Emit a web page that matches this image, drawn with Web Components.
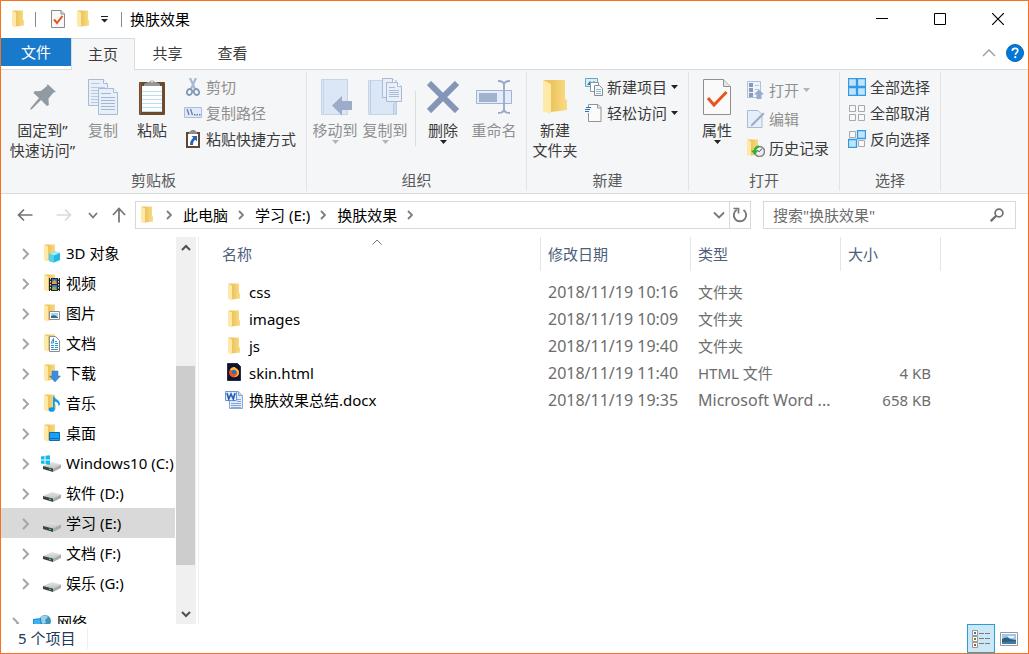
<!DOCTYPE html>
<html lang="zh-CN">
<head>
<meta charset="utf-8">
<title>换肤效果</title>
<style>
:root{
  --accent:#1979ca; --frame:#f7721f; --line:#dadbdc; --ribbon:#f5f6f7;
  --text:#000; --ribbon-text:#3b3b3b; --muted:#6d6d6d; --head:#4c607a; --off:#8f8f8f;
}
html,body{height:100%}
body{margin:0;font:15px/20px "Noto Sans","Noto Sans CJK SC",sans-serif;color:var(--text);background:#fff}
</style>
</head>
<body>
<explorer-window>
  <title-bar slot="title">换肤效果</title-bar>
  <tab-strip slot="tabs"></tab-strip>
  <ribbon-bar slot="ribbon">
    <ribbon-group label="剪贴板">
      <ribbon-button large icon="pin" style="--w:77px">固定到”<br>快速访问”</ribbon-button>
      <ribbon-button large icon="copy" off style="--w:44px">复制</ribbon-button>
      <ribbon-button large icon="paste" style="--w:54px">粘贴</ribbon-button>
      <ribbon-stack>
        <ribbon-button icon="cut" off>剪切</ribbon-button>
        <ribbon-button icon="path" off>复制路径</ribbon-button>
        <ribbon-button icon="shortcut">粘贴快捷方式</ribbon-button>
      </ribbon-stack>
    </ribbon-group>
    <ribbon-group label="组织" style="--end:8px">
      <ribbon-button large icon="moveto" off arrow style="--w:50px">移动到</ribbon-button>
      <ribbon-button large icon="copyto" off arrow style="--w:50px">复制到</ribbon-button>
      <ribbon-rule></ribbon-rule>
      <ribbon-button large icon="delete" arrow style="--w:54px">删除</ribbon-button>
      <ribbon-button large icon="rename" off style="--w:48px">重命名</ribbon-button>
    </ribbon-group>
    <ribbon-group label="新建">
      <ribbon-button large icon="folderL" style="--w:50px">新建<br>文件夹</ribbon-button>
      <ribbon-stack>
        <ribbon-button icon="newitem" arrow>新建项目</ribbon-button>
        <ribbon-button icon="easy" arrow>轻松访问</ribbon-button>
      </ribbon-stack>
    </ribbon-group>
    <ribbon-group label="打开">
      <ribbon-button large icon="props" arrow style="--w:50px">属性</ribbon-button>
      <ribbon-stack loose>
        <ribbon-button icon="open" off arrow>打开</ribbon-button>
        <ribbon-button icon="edit" off>编辑</ribbon-button>
        <ribbon-button icon="history">历史记录</ribbon-button>
      </ribbon-stack>
    </ribbon-group>
    <ribbon-group label="选择">
      <ribbon-stack>
        <ribbon-button icon="selall">全部选择</ribbon-button>
        <ribbon-button icon="selnone">全部取消</ribbon-button>
        <ribbon-button icon="selinv">反向选择</ribbon-button>
      </ribbon-stack>
    </ribbon-group>
  </ribbon-bar>
  <address-row slot="address"></address-row>
  <nav-pane slot="nav"></nav-pane>
  <file-list slot="files"></file-list>
  <status-bar slot="status">5 个项目</status-bar>
</explorer-window>

<script>
const folderShape = `<path d="M1 1h21v19l2 1v10l-16 2z" fill="url(#fg)"/><path d="M0 1l8 4v30l-8-3z" fill="#ffe9a6"/>`;
const defs = `<defs><linearGradient id="fg" x1="0" y1="0" x2="1" y2="0"><stop offset=".3" stop-color="#ebc35f"/><stop offset="1" stop-color="#fbdc83"/></linearGradient>
<linearGradient id="dg" x1="0" y1="0" x2="0" y2="1"><stop offset="0" stop-color="#e4e4e6"/><stop offset="1" stop-color="#c4c4c8"/></linearGradient></defs>`;
const sub = (extra) => [17,19, `<g transform="scale(.5 .5)">${folderShape}</g>${extra}`];
const drive = `<path d="M0 12l9-4 9 2.500-8 4z" fill="url(#dg)"/><path d="M0 12l10 2.500V18L0 15z" fill="#3f4245"/><path d="M10 14.500l8-4v3.500l-8 4z" fill="#a9aaad"/><path d="M6 14.500l2 .5v1.300l-2-.5z" fill="#48d043"/>`;
const page = (x,y,w,h) => `<path d="M${x+.5} ${y+.5}h${w-5}l4 4v${h-5}h${-(w-1)}z" fill="#e9eff9" stroke="#a9bad6"/><path d="M${x+w-4.5} ${y+.5}v4h4" fill="#fff" stroke="#a9bad6"/>`;
const rules = (x,y,w,n,s,c) => Array.from({length:n},(_,i)=>`<path d="M${x} ${y+i*s+.5}h${w}" stroke="${c}"/>`).join('');
const cellOn = ([x,y]) => `<path d="M${x+.5} ${y+.5}h8v8h-8z" fill="#bfe4fd" stroke="#3498e3" stroke-width="1.300"/>`;
const cellOff = ([x,y]) => `<path d="M${x+.5} ${y+.5}h6v6h-6z" fill="#f8f8f8" stroke="#a9a9a9"/>`;
const ICONS = {
  folder:[12,18, `<g transform="scale(.5 .5)">${folderShape}</g>`],
  folderL:[24,36, folderShape],
  tinydoc:[14,18, `<path d="M.5.5h9.500l3.500 3.500v13.500H.5z" fill="#f8f8f8" stroke="#8b8b8b"/><path d="M10 .5V4h3.500" fill="#ddd" stroke="#8b8b8b"/><path d="M3 9.500l3 3.500 5.500-7" fill="none" stroke="#e8501c" stroke-width="2"/>`],
  qat:[7,7, `<path d="M0 .5h7" stroke="#222"/><path d="M0 3h7L3.500 6.500z" fill="#222"/>`],
  min:[12,12, `<path d="M0 5.500h12" stroke="#000"/>`],
  max:[12,12, `<path d="M.5.5h11v11H.5z" fill="none" stroke="#000"/>`],
  close:[12,12, `<path d="M0 0l12 12M12 0L0 12" stroke="#000" stroke-width="1.200"/>`],
  collapse:[14,8, `<path d="M1 7l6-6 6 6" fill="none" stroke="#9a9a9a" stroke-width="1.300"/>`],
  help:[18,18, `<circle cx="9" cy="9" r="8.500" fill="#0078d7" stroke="#0a64b4"/><path d="M6.300 7c0-1.600 1.100-2.600 2.800-2.600s2.700 1 2.700 2.300c0 1.900-2.400 1.900-2.400 4" fill="none" stroke="#fff" stroke-width="1.700"/><circle cx="9.300" cy="13.200" r="1.100" fill="#fff"/>`],
  pin:[26,26, `<path d="M17.500 0L26 8l-2.500.5-5 6 .3 6.500-1.800 1-6-6L2 25l-2 1 1-2.500L9 14 3.500 9l1-1.700 6.300-.2L17 2z" fill="#8f9aa3"/>`],
  copy:[30,36, page(0,0,20,27)+rules(3,4,9,1,3,'#b8c9e2')+rules(3,8,14,6,3,'#b8c9e2')+page(10,9,20,27)+rules(13,14,10,1,3,'#a3b6d3')+rules(13,18,14,5,3,'#a3b6d3')],
  paste:[28,38, `<rect x="1" y="4" width="26" height="33" rx="1" fill="#6d4a2e"/><path d="M2 5h1v31H2z" fill="#8b6545"/><path d="M4 8h20v26H4z" fill="#fdfeff"/>${rules(4,13,20,6,4,'#bfdcec')}<path d="M6 8V6l4-2h1.500a2.700 3 0 0 1 5 0H18l4 2v2z" fill="#969696"/><circle cx="14" cy="3.500" r="1" fill="#eee"/>`],
  cut:[18,18, `<path d="M6 0l5.500 12M12 0L6.500 12" stroke="#a9b8d2" stroke-width="2.200"/><ellipse cx="5.500" cy="14" rx="2.500" ry="3" transform="rotate(20 5.500 14)" fill="none" stroke="#8397bb" stroke-width="1.800"/><ellipse cx="12.500" cy="14" rx="2.500" ry="3" transform="rotate(-20 12.500 14)" fill="none" stroke="#8397bb" stroke-width="1.800"/>`],
  path:[18,18, `<path d="M.5 3.500h17v10H.5z" fill="#dfe9f8" stroke="#abbeda"/><path d="M3 5l2 6M6.500 5l2 6" stroke="#69809f" stroke-width="1.300"/><path d="M10 10h1.500v1.500H10zM12.500 10H14v1.500h-1.500zM15 10h1.500v1.500H15z" fill="#69809f"/>`],
  shortcut:[18,18, `<path d="M2 2h14v16H2z" fill="#644631"/><path d="M4 4h10v12H4z" fill="#fff"/><path d="M5 2l3-2h2l3 2v2H5z" fill="#8c8c8c"/><path d="M7.500 6H13v5.500l-1.700-1.700C9.500 11 9 12.500 9 15H6c0-3 1-5.300 3.300-7.200z" fill="#2b63b1"/>`],
  moveto:[34,38, `<path d="M3.500 1.500h26v35h-26z" fill="#dbe6f6" stroke="#c6d4ea"/><path d="M5.500 2v34" stroke="#c6d4ea"/><path d="M14 27.500l10-9.500v5h11v9H24v5.500z" fill="#9dadc9"/>`],
  copyto:[34,38, `<path d="M.5 2.500h28v34H.5z" fill="#dbe6f6" stroke="#c6d4ea"/><path d="M2.500 3v33M25.500 36V26q3-4 3 0v10z" stroke="#bccbe2" fill="#cedbee"/>${page(14,0,15,20)}${page(18,4,16,20)}${rules(21,9,6,1,3,'#a9bbd5')}${rules(21,12,10,4,2,'#a9bbd5')}`],
  delete:[32,32, `<path d="M2 2l28 28M30 2L2 30" stroke="#8595b6" stroke-width="6"/>`],
  rename:[36,36, `<path d="M.5 11.500h35v13H.5z" fill="#e2ecfa" stroke="#a2b4d0"/><path d="M3 14h18v9H3z" fill="#a2b2cd"/><path d="M22 2c4 0 6 1 6 4v24c0 3-2 4-6 4M34 2c-4 0-6 1-6 4v24c0 3 2 4 6 4" fill="none" stroke="#98a9c7" stroke-width="1.800"/>`],
  newitem:[18,18, `<path d="M.5.5h12v8H.5z" fill="#d8eef9" stroke="#6ea3be"/><path d="M2 7l3-4 2 2 2-2 3 4z" fill="#367fa8"/><path d="M5.500 4.500h8v9h-8z" fill="#fff" stroke="#8d969b"/><path d="M9.500 7.500h5l3 3v7h-8z" fill="#f1f7fb" stroke="#848c91"/>${rules(11,11,5,3,2,'#9bbad1')}`],
  easy:[18,18, `<path d="M3.500.5H13l3 3v14H3.500z" fill="#fbfbfb" stroke="#949494"/><path d="M12.500.5v3.500H16" fill="none" stroke="#949494"/><path d="M1 3h6v6H1z" fill="#f5f6f7"/><path d="M1 3.500h5M0 5.500h5M0 7.500h4" stroke="#2f72b5"/>`],
  props:[28,36, `<path d="M.5.5h20l7 7v28H.5z" fill="#fafafa" stroke="#909090"/><path d="M20.500.5v7h7" fill="#e5e5e5" stroke="#909090"/><path d="M5 19l6 7L23.500 13" fill="none" stroke="#e9531d" stroke-width="3"/>`],
  open:[18,18, `<path d="M.5.5h13v16H.5z" fill="#edf3fb" stroke="#b1c0d8"/><path d="M2 2h4v4H2zM2 7h4v4H2zM2 12h4v4H2z" fill="#8699bb"/>${rules(8,4,4,3,4,'#b7c6dc')}<path d="M12 8.500l5 5h-2.500V18h-5v-4.500H7z" fill="#9aabc9"/>`],
  edit:[18,18, `<path d="M.5.500H11l4 4v13H.500z" fill="#e6eef9" stroke="#a9bad4"/><path d="M16 2.500l1.500 1.500L6 15.500l-2.500 1 1-2.500z" fill="#9aabc7"/>`],
  history:[18,18, `<g transform="scale(.5 .5)">${folderShape}</g><circle cx="12.500" cy="12.500" r="5" fill="#eee" stroke="#858585" stroke-width="1.500"/><path d="M12.500 12.500l2.500-3M12.500 12.500l-2.500-1" stroke="#555"/><path d="M12 6.500c-3 0-5 2-5.300 5H4l4 4.500 3-4.500H9.200c.2-1.500 1.300-2.600 3-3z" fill="#28b03c"/>`],
  selall:[18,18, [[0,0],[9,0],[0,9],[9,9]].map(cellOn).join('')],
  selnone:[18,18, [[1,1],[10,1],[1,10],[10,10]].map(cellOff).join('')],
  selinv:[18,18, [[1,1],[10,10]].map(cellOff).join('')+[[9,0],[0,9]].map(cellOn).join('')],
  down:[7,4, `<path d="M0 0h7L3.500 4z" fill="currentColor"/>`],
  back:[16,14, `<path d="M15.500 7H1.500M7 1.500L1.500 7 7 12.500" fill="none" stroke="#737373" stroke-width="1.700"/>`],
  fwd:[16,14, `<path d="M.5 7h14M9 1.500L14.500 7 9 12.500" fill="none" stroke="#dadada" stroke-width="1.700"/>`],
  up:[14,16, `<path d="M7 15.500V1.500M1 8l6-6.500L13 8" fill="none" stroke="#737373" stroke-width="1.700"/>`],
  chevD:[10,7, `<path d="M1 1l4 4.500L9 1" fill="none" stroke="#777" stroke-width="1.800"/>`],
  chevDL:[12,8, `<path d="M1 1.500l5 5 5-5" fill="none" stroke="#777" stroke-width="1.800"/>`],
  chevR:[6,10, `<path d="M1 1l4 4-4 4" fill="none" stroke="#7d7d7d" stroke-width="1.800"/>`],
  tree:[8,12, `<path d="M1 1l5 5-5 5" fill="none" stroke="#a6a6a6" stroke-width="2"/>`],
  sbUp:[10,7, `<path d="M1 6l4-4 4 4" fill="none" stroke="#505050" stroke-width="2"/>`],
  sbDown:[10,7, `<path d="M1 1l4 4 4-4" fill="none" stroke="#505050" stroke-width="2"/>`],
  sort:[10,6, `<path d="M.5 5.500L5 1l4.500 4.500" fill="none" stroke="#777"/>`],
  refresh:[16,16, `<path d="M4.800 2.800A6.200 6.200 0 1 0 11.500 3" fill="none" stroke="#777" stroke-width="1.900"/><path d="M1.500 1.500h5v5" fill="none" stroke="#777" stroke-width="1.700"/>`],
  search:[14,14, `<circle cx="9" cy="5" r="3.900" fill="none" stroke="#6f6f6f" stroke-width="1.700"/><path d="M6.200 7.800L.8 13.200" stroke="#6f6f6f" stroke-width="2.300"/>`],
  f3d:sub(`<path d="M5 10l6-2.500 5 1.500v7l-6 2.500-5-1.500z" fill="#24b8de"/><path d="M5 10l6-2.500 5 1.500-6 2.500z" fill="#a6ecf8"/><path d="M5 10l5 1.500v7L5 17z" fill="#52d2ec"/>`),
  fvid:sub(`<path d="M5 4h11v13H5z" fill="#26262a"/><path d="M8 5h5v5H8zM8 11h5v5H8z" fill="#3276cf"/><path d="M8 8l3-2 2 4H8z" fill="#f0a030"/><path d="M8 14l3-2 2 4H8z" fill="#86b640"/><path d="M6.500 4v13M14.500 4v13" stroke="#ddd" stroke-dasharray="1.500 1.500"/>`),
  fpic:sub(`<path d="M5.500 7.500h10v8h-10z" fill="#fff" stroke="#8c8c8c"/><path d="M7 9h7v3H7z" fill="#a4d4f6"/><path d="M7 14v-2l3-1 4 2v1z" fill="#346b86"/>`),
  fdoc:sub(`<path d="M5.500 2.500h6l4 4v11h-10z" fill="#fff" stroke="#8c8c8c"/><path d="M7 9l2.500-4.500V9zM11 7.500h2M11 9.500h3M7 11.500h3M11 11.500h3M7 13.500h3M11 13.500h3M7 15.500h7" fill="none" stroke="#2c8fd2"/>`),
  fdown:sub(`<path d="M8 7h6v5h2.500L11 18l-5.500-6H8z" fill="#3c8ddb" stroke="#2878c4" stroke-width=".5"/>`),
  fmus:sub(`<ellipse cx="7.700" cy="15.500" rx="3" ry="2.300" fill="#0c9bf2"/><path d="M9 15.500V2.500h1.500c0 3 5.500 3 5.500 8l-1.500 1.500c0-3-1.500-4-3.800-4.500v8z" fill="#0c9bf2"/>`),
  fdesk:sub(`<path d="M5.500 8.500h10v8h-10z" fill="#1ba1f3" stroke="#0c69b2"/><path d="M6 14.500h9" stroke="#0d6dbc"/>`),
  drive:[18,18, drive],
  windrive:[20,18, `<g transform="translate(2 0)">${drive}</g><path d="M0 2.500L3.500 2v3.500H0zM4.500 1.800L9 1.200v4.300H4.500zM0 6.500h3.500V10L0 9.500zM4.500 6.500H9v4.300l-4.500-.6z" fill="#12b8f4"/>`],
  network:[18,18, `<circle cx="12" cy="8" r="6" fill="#3f94bd"/><path d="M7 5c2-3 6-3 8-1l-3 3 1 3-3 1-3-3z" fill="#98d0e6"/><path d="M0 6l8-1 1 10-9 1z" fill="#1c8dd9"/><path d="M1 7l6-.7.800 8L1 15z" fill="#3cb0f2"/>`],
  firefox:[18,19, `<path d="M2.500.5h10l3 3v14h-13z" fill="#0c1230" stroke="#252d4e"/><circle cx="9" cy="9.500" r="5" fill="#f15126"/><path d="M5 7c1-3 3.500-3 5-3-1 1 4 2 4 5.500 0 3-2 4.500-5 4.500 2-1 4-2.500 3-5.500z" fill="#ffbd2d"/><circle cx="9" cy="9" r="2.300" fill="#316dc5"/>`],
  word:[18,20, `<path d="M4.500 1.500h9l4 4v13h-13z" fill="#dfeafa" stroke="#8fa7c9"/><path d="M13.500 1.500v4h4" fill="#c7d9ef" stroke="#8fa7c9"/>${rules(12,9,4,2,2,'#86a9dc')}${rules(6,13,10,3,2,'#86a9dc')}<path d="M.5 1.500h11v9H.5z" fill="#e9f1fc" stroke="#6d95cf"/><path d="M2 3l1.700 6 2.300-5 2.300 5L10 3" fill="none" stroke="#2c62b8" stroke-width="1.700"/>`],
  vdetail:[18,18, `${[0,6,12].map(y=>`<path d="M.5 ${y+.5}h5v5h-5z" fill="#fff" stroke="#999"/>`).join('')}<path d="M2 2h2v2H2z" fill="#3d7aa8"/><path d="M2 8h2v2H2z" fill="#6c8437"/><path d="M2 14h2v2H2z" fill="#c3431f"/><path d="M7 3.500h5M13 3.500h5M7 8.500h5M13 8.500h5M7 13.500h5M13 13.500h5" stroke="#7b7b7b"/>`],
  vpic:[18,14, `<path d="M.5.5h17v13H.5z" fill="#fff" stroke="#999"/><path d="M2 2h14v10H2z" fill="#9dc7f1"/><path d="M2 7c3-2 6-2 8 0l6 1v4H2z" fill="#315c72"/><path d="M2 10l14-1v3H2z" fill="#4179a7"/><path d="M8 4h6v2H9z" fill="#e8f3fd"/>`]
};
class Base extends HTMLElement{
  constructor(){super();this.attachShadow({mode:'open'})}
  connectedCallback(){
    this.shadowRoot.innerHTML = `<style>
      *{box-sizing:border-box} :host{display:block;box-sizing:border-box}
      button{font:inherit;color:inherit;border:0;background:none;padding:0;margin:0;display:flex;align-items:center;justify-content:center}
      a{color:inherit;text-decoration:none}
      ${this.css||''}</style>${this.html()}`;
  }
}
const define = (name, css, html) => customElements.define(name, class extends Base{
  get css(){return css} html(){return html.call(this)}
});

define('ui-icon', `:host{display:inline-flex;flex:none} svg{display:block}`, function(){
  const [w,h,body] = ICONS[this.getAttribute('name')];
  return `<svg aria-hidden="true" width="${w}" height="${h}" viewBox="0 0 ${w} ${h}">${defs}${body}</svg>`;
});

define('explorer-window', `
  :host{height:100vh;border:1px solid var(--frame);display:grid;grid-template-rows:auto auto auto auto minmax(0,1fr) auto;background:#fff}
  main{display:grid;grid-template-columns:auto minmax(0,1fr);min-height:0}`,
  () => `<slot name="title"></slot><slot name="tabs"></slot><slot name="ribbon"></slot><slot name="address"></slot>
  <main><slot name="nav"></slot><slot name="files"></slot></main><slot name="status"></slot>`);

define('title-bar', `
  :host{display:flex;height:37px;align-items:center;padding:0 1px 1px 11px}
  i{width:1px;height:15px;background:#8a8a8a}
  .qat{display:flex;margin:0 7px 0 9px} .qat button{padding:0 6px;height:24px}
  ui-icon.app{margin-right:11px}
  h1{font:inherit;margin:0 0 0 8px;flex:1}
  .win{display:flex;align-self:stretch} .win button{width:58px}`,
  () => `<ui-icon class="app" name="folder"></ui-icon><i></i>
  <div class="qat"><button aria-label="属性"><ui-icon name="tinydoc"></ui-icon></button><button aria-label="新建文件夹"><ui-icon name="folder"></ui-icon></button><button aria-label="自定义快速访问工具栏"><ui-icon name="qat"></ui-icon></button></div>
  <i></i><h1><slot></slot></h1>
  <div class="win"><button aria-label="最小化"><ui-icon name="min"></ui-icon></button><button aria-label="最大化"><ui-icon name="max"></ui-icon></button><button aria-label="关闭"><ui-icon name="close"></ui-icon></button></div>`);

define('tab-strip', `
  :host{display:flex;height:32px;border-bottom:1px solid var(--line);color:var(--ribbon-text)}
  button{width:65px;height:31px;padding-bottom:2px}
  .file{width:70px;height:28px;background:var(--accent);color:#fff;padding:0}
  .on{width:64px;height:32px;background:var(--ribbon);border:1px solid var(--line);border-bottom:0}
  span{flex:1} .mini{width:26px}`,
  () => `<button class="file">文件</button><button class="on">主页</button><button>共享</button><button>查看</button><span></span>
  <button class="mini" aria-label="最小化功能区"><ui-icon name="collapse"></ui-icon></button><button class="mini" aria-label="帮助"><ui-icon name="help"></ui-icon></button>`);

define('ribbon-bar', `:host{display:flex;background:var(--ribbon);border-bottom:1px solid var(--line);height:124px;padding:2px 0;color:var(--ribbon-text)}`,
  () => `<slot></slot>`);

define('ribbon-group', `
  :host{display:flex;flex-direction:column;border-right:1px solid #e2e3e4;padding-bottom:1px;color:var(--ribbon-text)}
  .body{display:flex;flex:1;align-items:flex-start;padding:0 var(--end,10px) 0 3px}
  .name{text-align:center;color:#5a5a5a;height:20px}`,
  function(){return `<div class="body"><slot></slot></div><div class="name">${this.getAttribute('label')}</div>`});

define('ribbon-stack', `
  :host{display:flex;flex-direction:column;gap:6px;padding:5px 0 0 5px}
  :host([loose]){gap:9px;padding-top:8px}`, () => `<slot></slot>`);

define('ribbon-rule', `:host{width:1px;height:55px;background:#dcddde;margin:19px 0 0 5px}`, () => ``);

define('ribbon-button', `
  :host([off]){color:var(--off)}
  button{gap:4px;height:20px;white-space:nowrap}
  .pic{display:flex}
  :host([large]){width:var(--w)}
  :host([large]) button{flex-direction:column;justify-content:flex-start;gap:0;width:100%;height:auto;padding-top:6px}
  :host([large]) .pic{height:38px;align-items:center;margin-bottom:4px}
  .arrow{color:#222} :host([off]) .arrow{color:#b4b4b4}`,
  function(){return `<button ${this.hasAttribute('off')?'aria-disabled="true"':''}><span class="pic"><ui-icon name="${this.getAttribute('icon')}"></ui-icon></span><span><slot></slot></span>${this.hasAttribute('arrow')?'<ui-icon class="arrow" name="down"></ui-icon>':''}</button>`});

define('address-row', `
  :host{display:flex;align-items:center;height:43px;padding:0 12px 1px 4px}
  .bar,.find{display:flex;height:28px;border:1px solid #d9d9d9;align-items:stretch}
  .bar{flex:1;padding-left:5px;margin-right:12px;min-width:0}
  .bar>ui-icon{align-self:center;margin-right:4px}
  nav{display:flex;flex:1;align-items:center;white-space:nowrap;overflow:hidden}
  nav a{padding:0 1px 0 2px} nav button{width:24px;height:26px}
  .b40{width:40px}.b38{width:38px}.b20{width:20px}.b32{width:32px}
  .refresh{width:21px;border-left:1px solid #d9d9d9}
  .find{width:253px}
  input{flex:1;min-width:0;border:0;outline:0;background:none;font:inherit;padding:0 0 0 9px}
  input::placeholder{color:#6d6d6d;opacity:1}
  .find button{width:36px}`,
  () => {const c='<button aria-label="展开"><ui-icon name="chevR"></ui-icon></button>';return `
  <button class="b40" aria-label="后退"><ui-icon name="back"></ui-icon></button><button class="b38" aria-label="前进"><ui-icon name="fwd"></ui-icon></button><button class="b20" aria-label="最近位置"><ui-icon name="chevD"></ui-icon></button><button class="b32" aria-label="向上"><ui-icon name="up"></ui-icon></button>
  <div class="bar"><ui-icon name="folder"></ui-icon><nav>${c}<a href="#">此电脑</a>${c}<a href="#">学习 (E:)</a>${c}<a href="#">换肤效果</a>${c}</nav><button class="b20" aria-label="历史位置"><ui-icon name="chevDL"></ui-icon></button><button class="refresh" aria-label="刷新"><ui-icon name="refresh"></ui-icon></button></div>
  <div class="find"><input type="search" aria-label="搜索" placeholder='搜索"换肤效果"'><button aria-label="开始搜索"><ui-icon name="search"></ui-icon></button></div>`});

define('tree-item', `
  a{display:flex;align-items:center;height:30px;white-space:nowrap;overflow:hidden}
  .tw{width:19px;margin-left:21px;display:flex;flex:none;padding-top:1px} .ic{width:20px;flex:none;margin-right:5px;display:flex;justify-content:flex-end}
  :host([selected]) a{background:#d9d9d9}
  :host([top]) .tw{margin-left:11px} :host([top]) .ic{margin-right:6px}
  :host([top]){margin-top:9px}`,
  function(){return `<a href="#"><span class="tw"><ui-icon name="tree"></ui-icon></span><span class="ic"><ui-icon name="${this.getAttribute('icon')}"></ui-icon></span><span><slot></slot></span></a>`});

define('nav-pane', `
  :host{display:grid;grid-template-columns:174px 20px;column-gap:1px;border-right:1px solid #efefef;padding-right:2px;min-height:0;overflow:hidden}
  .tree{overflow:hidden;min-height:0;padding-top:1px}`,
  () => `<div class="tree">${[['f3d','3D 对象'],['fvid','视频'],['fpic','图片'],['fdoc','文档'],['fdown','下载'],['fmus','音乐'],['fdesk','桌面'],['windrive','Windows10 (C:)'],['drive','软件 (D:)'],['drive','学习 (E:)','selected'],['drive','文档 (F:)'],['drive','娱乐 (G:)'],['network','网络','top']].map(([i,t,a])=>`<tree-item icon="${i}" ${a||''}>${t}</tree-item>`).join('')}</div><scroll-rail></scroll-rail>`);

define('scroll-rail', `
  :host{background:#f0f0f0;display:grid;grid-template-rows:20px minmax(0,1fr) 20px;min-height:0}
  button{padding-right:1px}
  .track{display:grid;grid-template-rows:109fr 199fr 39fr} .thumb{grid-row:2;background:#cdcdcd;margin-right:1px}`,
  () => `<button aria-label="向上滚动"><ui-icon name="sbUp"></ui-icon></button><div class="track"><div class="thumb"></div></div><button aria-label="向下滚动"><ui-icon name="sbDown"></ui-icon></button>`);

define('file-list', `
  :host{min-width:0;overflow:hidden}
  table{table-layout:fixed;width:742px;border-collapse:separate;border-spacing:0}
  th{height:34px;font-weight:400;text-align:left;color:var(--head);border-right:1px solid #e5e5e5;padding:0 0 0 7px;position:relative}
  th:first-child{padding-left:23px}
  th ui-icon{position:absolute;top:2px;left:173px}
  tbody::before{content:"";display:block;height:7px}
  td{height:27px;padding:0 10px 0 7px;color:var(--muted);white-space:nowrap;overflow:hidden;text-overflow:ellipsis}
  td:first-child{padding-left:26px;color:#000} td:last-child{text-align:right}
  td.latin{font-size:16px}
  a{display:flex;align-items:center;gap:6px} .ic{width:18px;display:flex;justify-content:center}
  .n{width:342px}.m{width:150px}.s{width:100px}`,
  () => `<table><colgroup><col class="n"><col class="m"><col class="m"><col class="s"></colgroup>
  <thead><tr><th>名称<ui-icon name="sort"></ui-icon></th><th>修改日期</th><th>类型</th><th>大小</th></tr></thead>
  <tbody>${[['folder','css','2018/11/19 10:16','文件夹',''],['folder','images','2018/11/19 10:09','文件夹',''],['folder','js','2018/11/19 19:40','文件夹',''],['firefox','skin.html','2018/11/19 11:40','HTML 文件','4 KB'],['word','换肤效果总结.docx','2018/11/19 19:35','Microsoft Word ...','658 KB']].map(([i,n,d,t,s])=>`<tr><td><a href="#"><span class="ic"><ui-icon name="${i}"></ui-icon></span>${n}</a></td><td class="latin">${d}</td><td${t.includes('文件')?'':' class="latin"'}>${t}</td><td>${s}</td></tr>`).join('')}</tbody></table>`);

define('status-bar', `
  :host{display:flex;height:29px;align-items:center;color:#1e395b;padding:0 5px 0 17px}
  .count{padding:0 12px 1px 0;border-right:1px solid #eee;flex:none}
  .gap{flex:1} button{width:28px;height:29px} .on{background:#cce8f6;border:1px solid #26a0da}`,
  () => `<span class="count"><slot></slot></span><span class="gap"></span><button class="on" aria-label="详细信息"><ui-icon name="vdetail"></ui-icon></button><button aria-label="大图标"><ui-icon name="vpic"></ui-icon></button>`);
</script>
</body>
</html>
